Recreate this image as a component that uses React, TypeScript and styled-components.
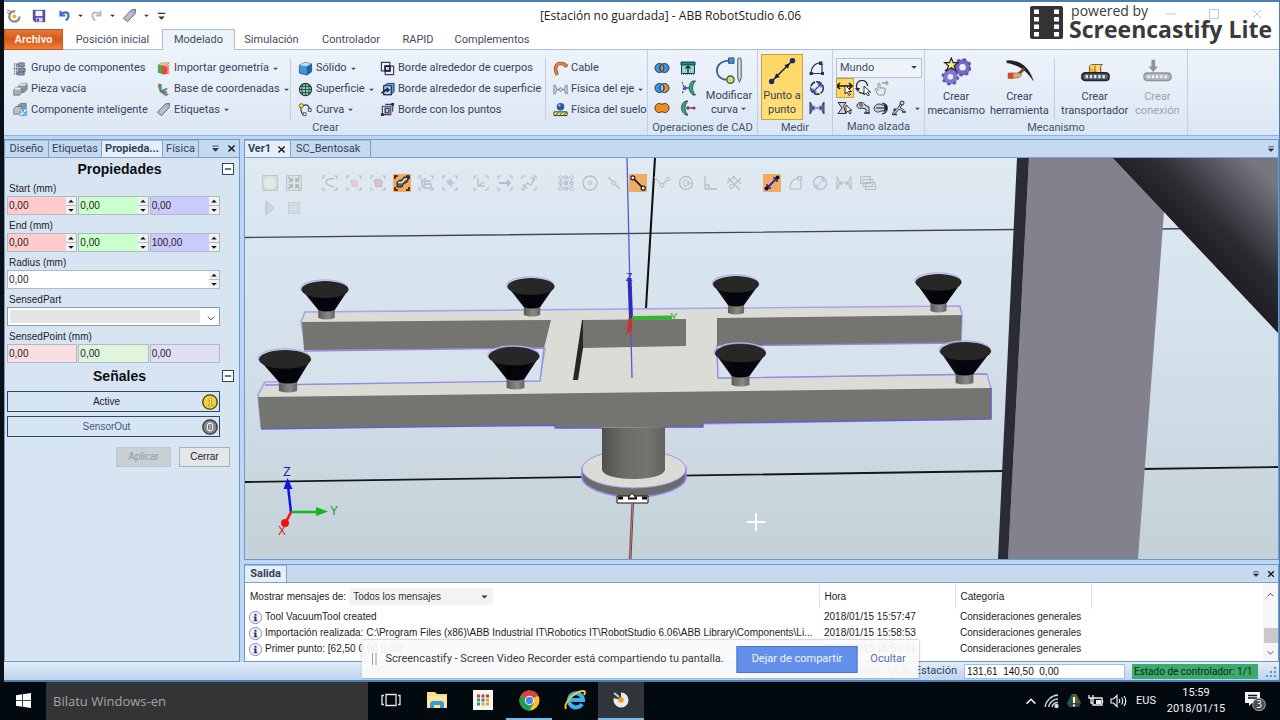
import React from 'react';
import styled, { createGlobalStyle, css } from 'styled-components';

const ui = 'Roboto, "Open Sans", sans-serif';
const wide = '"Open Sans", "Noto Sans", sans-serif';
const sans = '"Liberation Sans", Arial, sans-serif';

const GlobalStyle = createGlobalStyle`
  * { box-sizing: border-box; }
  html, body { margin: 0; padding: 0; }
  body { font-family: ${ui}; font-size: 11px; line-height: 16px; color: #34425c; background: #0a1016; }
  button, input, select { font: inherit; color: inherit; margin: 0; padding: 0; border: 0; background: none; border-radius: 0; }
  svg { display: block; flex: none; }
`;

/* ---------- icons ---------- */

const glyphs: Record<string, React.ReactNode> = {
  app: (
    <>
      <circle cx="9" cy="9" r="5.5" fill="none" stroke="#8d9294" strokeWidth="2.6" strokeDasharray="26 9" />
      <circle cx="9" cy="9" r="2.2" fill="#e9b52c" />
      <path d="M1 2 6 4M1 5l4 1" stroke="#777" strokeWidth="1" />
    </>
  ),
  save: (
    <>
      <path d="M1.500 1.500h13v13h-11l-2-2z" fill="#5a55b5" stroke="#35317e" />
      <path d="M4 2h8v6H4z" fill="#f2f4fb" />
      <path d="M5 10h7v4.500H5z" fill="#d8daf0" />
      <path d="M6 11h2v3H6z" fill="#35317e" />
    </>
  ),
  undo: <path d="M3 2v6h6M3.500 7.500C6 3 13 3 13 8c0 3-1 4.500-3.500 6" fill="none" stroke="#3f6fc0" strokeWidth="2.600" />,
  redo: <path d="M13 2v6H7M12.500 7.500C10 3 3 3 3 8c0 3 1 4.500 3.500 6" fill="none" stroke="#b9bcc2" strokeWidth="2.400" />,
  tag: (
    <>
      <path d="M1.500 11 10 2l4.500-.5L14 6l-8 8.500z" fill="#b9bbd2" stroke="#62647c" />
      <circle cx="12" cy="4" r="1" fill="#fff" stroke="#62647c" strokeWidth=".6" />
    </>
  ),
  more: <path d="M4 5h8v1.500H4zM4.500 9h7L8 12.500z" fill="#333" />,
  group: (
    <>
      <path d="M3.500 3.500h8v10h-8z" fill="#b8c0cc" stroke="#4d5a6d" strokeDasharray="2 1" />
      <path d="M6 2h6v4H6zM6 8h7v3H6zM5 12h7v3H5z" fill="#8d99ab" stroke="#4d5a6d" strokeWidth=".8" />
      <path d="M1.500 3v11M1 3h3M1 8h3M1 14h3" stroke="#4d5a6d" strokeDasharray="1 1" />
    </>
  ),
  part: (
    <>
      <path d="m6 4 3-2.500h6V8l-3 3H6z" fill="#8f959c" stroke="#555b62" strokeWidth=".7" />
      <path d="M6 4 9 1.500h6L12.500 4z" fill="#e3e6e9" />
      <path d="m.8 8 2.500-2.200h6v5.500L7 14H.8z" fill="#a9afb5" stroke="#555b62" strokeWidth=".7" />
      <path d="m.8 8 2.500-2.200h6L7 8z" fill="#eef0f2" />
    </>
  ),
  smart: (
    <>
      <path d="m5 4 3-2.500h6V8l-3 3H5z" fill="#8f959c" stroke="#555b62" strokeWidth=".7" />
      <path d="m.8 7 2.500-2.200h6v5.500L7 13H.8z" fill="#b9bfc5" stroke="#555b62" strokeWidth=".7" />
      <path d="M7 7h8v8H7z" fill="#5aa6e0" />
      <path d="m8 8 6 6m0-6-6 6" stroke="#fff" strokeWidth="1.800" />
      <path d="m9 8 5 6" stroke="#1d5f9e" strokeWidth="1" />
    </>
  ),
  importGeo: (
    <>
      <path d="M2 4.500 6 2h8l-3 2.500z" fill="#f6d9a8" stroke="#8d6b33" strokeWidth=".6" />
      <path d="M2 4.500h6V14l-6-1.500z" fill="#4ca457" />
      <path d="M6.500 5H14v8.500l-7.500 1z" fill="#df4c36" />
      <path d="M6.500 5 9 4h6l-1 1.500v8l-2 .5V6z" fill="#f39b8a" />
    </>
  ),
  frame: (
    <>
      <path d="M5 2v8l6 4M5 10l7-3" fill="none" stroke="#2d8fc7" strokeWidth="2" />
      <path d="M5 10 3 4" stroke="#2bab4b" strokeWidth="2" />
      <path d="m5 10 7 1" stroke="#e8452f" strokeWidth="2" />
      <path d="m2 5 1-4 2.500 3z" fill="#e8452f" />
      <path d="m10 12 4 1-3 2z" fill="#2bab4b" />
    </>
  ),
  solid: (
    <>
      <path d="m1.500 4.500 6-3 7 1.500v8.500l-5 3.500-8-2z" fill="#3f95d6" stroke="#1d4e7d" strokeWidth=".8" />
      <path d="m1.500 4.500 6-3 7 1.500-5 2.500z" fill="#bfe0f5" />
      <path d="M9.500 5.500 14.500 3v8.500l-5 3.500z" fill="#1e65a6" />
    </>
  ),
  surface: (
    <>
      <circle cx="8" cy="8" r="6.500" fill="#8fd3ba" stroke="#1f3f3a" strokeWidth="1.200" />
      <path d="M1.500 8h13M8 1.500v13M2.500 4.700h11M2.500 11.300h11M5 2.200Q3 8 5 13.800M11 2.200Q13 8 11 13.800" fill="none" stroke="#1f3f3a" strokeWidth=".9" />
    </>
  ),
  curve: (
    <>
      <path d="M3 5c0 5 1 8 3 8M5 4c4-2 7-1 7 4" fill="none" stroke="#2c3140" strokeWidth="1.200" />
      <circle cx="3.500" cy="4" r="2.300" fill="#f0d638" stroke="#5d5214" strokeWidth=".8" />
      <path d="M5.500 11.500h3v3h-3zM11 7h3v3h-3z" fill="#fff" stroke="#2c3140" strokeWidth=".9" />
    </>
  ),
  borderBodies: (
    <>
      <path d="M1.500 1.500h9v9h-9z" fill="none" stroke="#3d4258" strokeWidth="1.300" />
      <path d="M5.500 5.500h9v9h-9z" fill="none" stroke="#3d4258" strokeWidth="1.300" />
      <path d="M5.500 5.500h5v5h-5z" fill="#cfd5ea" stroke="#1d2138" strokeWidth="1.800" />
    </>
  ),
  borderSurface: (
    <>
      <path d="m4 4 4-2.500h7V10l-3 3.500H4z" fill="#5a9cd4" stroke="#1b2c55" strokeWidth=".9" />
      <path d="M4 4h8v9.500H4z" fill="#bcdcf2" stroke="#1b2c55" strokeWidth="1.300" />
      <path d="M1 11.500c2-1 3-4 6-4.500V5l4 3.500-4 3v-2c-2 .5-3 2.500-6 3z" fill="#1b2c55" />
    </>
  ),
  borderPoints: (
    <>
      <path d="M2.500 4.500h9v9h-9zM5.500 2.500h8v8" fill="none" stroke="#3d4258" strokeWidth="1.200" />
      <path d="M5.500 6.500h4v5h-4z" fill="#c9c2dd" stroke="#3d2d5c" strokeWidth="1.400" />
      <path d="M1 12h3v3H1zM12 1h3v3h-3z" fill="#262a3d" />
    </>
  ),
  cable: (
    <>
      <path d="M4.500 15C1 8 3 2.500 8 2.500c3 0 5 1 7 3.500" fill="none" stroke="#8a3a12" strokeWidth="3.600" />
      <path d="M4.500 15C1 8 3 2.500 8 2.500c3 0 5 1 7 3.500" fill="none" stroke="#e8824a" strokeWidth="2.200" />
    </>
  ),
  joint: (
    <>
      <path d="M1 3v10M2 3c2 2 2 8 0 10M15 3v10M14 3c-2 2-2 8 0 10" fill="none" stroke="#6c7484" />
      <path d="M4 8h8" stroke="#6c7484" strokeWidth="1.200" />
      <circle cx="8" cy="8" r="1.800" fill="#dde3ec" stroke="#6c7484" />
    </>
  ),
  floor: (
    <>
      <path d="M1 10.500h14v4H1z" fill="#e9e48b" stroke="#33361e" />
      <path d="m3 14 3-3m1 3 3-3m1 3 3-3" stroke="#33361e" />
      <circle cx="8" cy="5" r="4" fill="#2457a8" />
      <circle cx="6.800" cy="3.600" r="1.300" fill="#9dc4f2" />
    </>
  ),
  intersect: (
    <>
      <circle cx="5.500" cy="8" r="4.500" fill="#3f95dd" stroke="#173a63" />
      <circle cx="10.500" cy="8" r="4.500" fill="#3f95dd" stroke="#173a63" />
      <path d="M8 4.300a4.500 4.500 0 0 1 0 7.400 4.500 4.500 0 0 1 0-7.400" fill="#f08c28" stroke="#173a63" />
    </>
  ),
  subtract: (
    <>
      <circle cx="10.500" cy="8" r="4.500" fill="#f08c28" stroke="#173a63" />
      <circle cx="5.500" cy="8" r="4.500" fill="#3f95dd" stroke="#173a63" />
      <path d="M8 4.300a4.500 4.500 0 0 1 0 7.400 4.500 4.500 0 0 1 0-7.400" fill="#9ecdf2" stroke="#173a63" />
    </>
  ),
  union: <path d="M8 4.500C11 2 15 4 15 8s-4 6-7 3.500C5 14 1 12 1 8s4-6 7-3.500z" fill="#f08c28" stroke="#4d3517" />,
  extrude: (
    <>
      <path d="M1.500 3.500h13v10h-13z" fill="#8fdcc9" stroke="#1d4440" />
      <path d="M1 2h14v3H1z" fill="#2a7d98" stroke="#173f55" />
      <path d="M8 13V6M5.500 8.500 8 6l2.500 2.500" fill="none" stroke="#16202c" strokeWidth="1.200" />
      <path d="M1 14h14" stroke="#16202c" strokeDasharray="1 1" />
    </>
  ),
  bend: (
    <>
      <path d="M13 1c-5 2-5 11 0 14h2.500c-4-4-4-10 0-14z" fill="#3fa98c" stroke="#17463b" strokeWidth=".9" />
      <path d="M2 2c2 3 2 9 0 12" fill="none" stroke="#23272f" strokeDasharray="2 1" />
      <path d="M9 8H4m2-2L4 8l2 2" fill="none" stroke="#2b57b3" strokeWidth="1.300" />
    </>
  ),
  bendTo: (
    <>
      <path d="M6 1C0 3 0 12 6 15h2C4 11 4 5 8 1z" fill="#3fa98c" stroke="#17463b" strokeWidth=".9" />
      <path d="M6 8h7" stroke="#b3243c" strokeWidth="1.400" />
      <circle cx="14" cy="8" r="1.500" fill="#b3243c" />
      <path d="M8 6v4" stroke="#23272f" />
    </>
  ),
  modifyCurve: (
    <>
      <path d="M16 4C6 4 2 10 2 15s4 10 11 10" fill="none" stroke="#3c5f96" strokeWidth="2" />
      <path d="M15 1h6v6h-6z" fill="#4193d4" stroke="#1d4e7d" />
      <circle cx="17" cy="25" r="4" fill="#f3dc3a" stroke="#2f5488" strokeWidth="1.500" />
      <path d="M25 3c0-3 4-3 4 0v20l-2 5-2-5z" fill="#b9bec7" stroke="#5d6470" />
      <path d="M27 4v19" stroke="#eef0f4" />
    </>
  ),
  pointToPoint: (
    <>
      <path d="M5 26 26 5" stroke="#16203e" strokeWidth="1.600" />
      <path d="m7 24 2-6 4 4zM24 7l-2 6-4-4z" fill="#16203e" />
      <circle cx="4" cy="27" r="3" fill="#1b2a63" />
      <circle cx="27" cy="4" r="3" fill="#1b2a63" />
    </>
  ),
  angle: (
    <>
      <path d="M2 14C2 7 6 3 11 3M2 13.500h12M13 4v9" fill="none" stroke="#2f3547" strokeWidth="1.200" />
      <path d="M10 1.500h3.500V5H10zM.500 12H4v3H.5zM12 12h3v3h-3z" fill="#2f3547" />
    </>
  ),
  diameter: (
    <>
      <circle cx="8" cy="8" r="6.300" fill="none" stroke="#272b38" strokeWidth="1.400" strokeDasharray="6 1" />
      <path d="m4 12 8-8M4 8.500V12h3.500M12 7.500V4H8.500" fill="none" stroke="#3542b0" strokeWidth="1.300" />
    </>
  ),
  minDist: (
    <>
      <path d="M1 2v12c3-3 3-9 0-12zM15 2v12c-3-3-3-9 0-12z" fill="#777e90" stroke="#272b38" strokeWidth=".9" />
      <path d="M3 8h10M5.500 6 3.500 8l2 2M10.500 6l2 2-2 2" fill="none" stroke="#3542b0" strokeWidth="1.200" />
    </>
  ),
  move: (
    <>
      <path d="M0 6h15M3 3 0 6l3 3M12 3l3 3-3 3" fill="none" stroke="#1b1b1b" strokeWidth="1.600" />
      <path d="m8 5 0 9 2-2 2 3.500 1.500-1-2-3h3z" fill="#fff" stroke="#1b1b1b" strokeWidth=".9" />
    </>
  ),
  rotate: (
    <>
      <path d="M2.500 9a5.500 5.500 0 1 1 10-3M12 11a5.500 5.500 0 0 1-8 1" fill="none" stroke="#2b2b2b" strokeWidth="1.300" />
      <path d="m0 8 3 4 2-4z" fill="#2b2b2b" />
      <path d="m9 6 0 9 2-2 2 3 1.500-1-2-3h3z" fill="#fff" stroke="#1b1b1b" strokeWidth=".9" />
    </>
  ),
  hand: (
    <>
      <path d="M5 15 2 9l1-.5 2 2V4c0-1 2-1 2 0v4h5v4l-1 3z" fill="#e7eaf0" stroke="#8d93a0" />
      <path d="M9 3h6m-2-2 2 2-2 2" fill="none" stroke="#9aa0ab" strokeWidth="1.300" />
    </>
  ),
  robotArm: (
    <>
      <path d="M1 2.500h8L6.500 6 9 13.500H1L5 8z" fill="#ccd0d8" stroke="#2e3138" />
      <path d="m9 5 0 8 2-2 2 3 1.200-1-2-2.500H15z" fill="#fff" stroke="#1b1b1b" strokeWidth=".9" />
    </>
  ),
  linkMove: (
    <>
      <path d="M2 5c2-4 7-3 8 0l4 2v6h-3V9L7 8C4 9 2 8 2 5z" fill="#ccd0d8" stroke="#2e3138" />
      <circle cx="6" cy="5" r="1.300" fill="#fff" stroke="#2e3138" />
      <path d="M9 13h6" stroke="#2e3138" strokeWidth="1.400" />
    </>
  ),
  linkRotate: (
    <>
      <path d="M1 8c1-4 6-5 8-3h3v6H8c-3 2-7 1-7-3z" fill="#ccd0d8" stroke="#2e3138" />
      <path d="M9 3c7 1 7 9 0 11M3 8h11m-3-3 3 3-3 3" fill="none" stroke="#1b1b1b" strokeWidth="1.200" />
    </>
  ),
  multiRobot: (
    <>
      <path d="M2 14 8 8M8 8l3-5M8 8l5 3M3 9l3 3" stroke="#2e3138" strokeWidth="2.600" />
      <path d="M2 14 8 8M8 8l3-5M8 8l5 3" stroke="#ccd0d8" strokeWidth="1.200" />
      <circle cx="11" cy="3" r="2" fill="#ccd0d8" stroke="#2e3138" />
      <path d="M1 14.500h5M11 12h4" stroke="#2e3138" strokeWidth="1.300" />
    </>
  ),
  mechanism: (
    <>
      <circle cx="23" cy="11" r="6" fill="none" stroke="#7668c4" strokeWidth="5" />
      <circle cx="23" cy="11" r="8.500" fill="none" stroke="#5d50ad" strokeWidth="2.500" strokeDasharray="3.400 3.300" />
      <circle cx="10" cy="21" r="5.500" fill="none" stroke="#8377d0" strokeWidth="5" />
      <circle cx="10" cy="21" r="8.200" fill="none" stroke="#5d50ad" strokeWidth="2.500" strokeDasharray="3.200 3.240" />
      <path d="m11 1 2 5 5 0-4 3.500 2 5-5-3-5 3 2-5L4 6l5 0z" fill="#f7ee7a" stroke="#22243a" strokeWidth="1.300" />
    </>
  ),
  pick: (
    <>
      <path d="M3 4C15 3 26 9 31 25 24 14 15 8 3 6z" fill="#1d1f23" stroke="#1d1f23" strokeWidth=".6" />
      <path d="m22 12-7 7" stroke="#7d4a1d" strokeWidth="3" />
      <path d="M5 17h7l5 0 2 2-3 3-11 1z" fill="#e5a57c" stroke="#7d4a2d" strokeWidth=".6" />
      <path d="M4 17h6v6H4z" fill="#d9472b" />
    </>
  ),
  conveyor: (
    <>
      <path d="M10 10h12v8H10z" fill="#f2b632" stroke="#8a5a12" />
      <path d="m10 10 2-2h12l-2 2v8M16 9v9" fill="#f9dc7a" stroke="#8a5a12" />
      <path d="M6 17h21q4 0 4 4t-4 4H6q-4 0-4-4t4-4z" fill="#5a5e6b" stroke="#22242b" strokeWidth="1.800" />
      <path d="M6 21h22" stroke="#dfe6ff" strokeWidth="3.500" strokeDasharray="2.500 2" />
    </>
  ),
  connection: (
    <>
      <path d="M10 3h4v7h3l-5 6-5-6h3z" fill="#8e929a" />
      <path d="M6 17h21q4 0 4 4t-4 4H6q-4 0-4-4t4-4z" fill="#b5b9c1" stroke="#8e929a" strokeWidth="1.500" />
      <path d="M6 21h22" stroke="#eef1f6" strokeWidth="3" strokeDasharray="2.500 2" />
    </>
  ),
  close: <path d="m3.500 3.500 9 9m0-9-9 9" stroke="#151515" strokeWidth="2" />,
  pin: <path d="M3.500 4.500h9M4 8h8l-4 4z" fill="#26354a" stroke="#26354a" strokeWidth="1.200" />,
  minus: <path d="M3 8h10" stroke="#16202c" strokeWidth="2" />,
  chevron: <path d="m3 6 5 5 5-5" fill="none" stroke="#3d3d3d" strokeWidth="1.500" />,
  chevronUp: <path d="m3 11 5-5 5 5" fill="none" stroke="currentColor" strokeWidth="1.700" />,
  caret: <path d="M2.500 6h11L8 11.500z" fill="currentColor" />,
  caretUp: <path d="M2.500 11h11L8 5.500z" fill="currentColor" />,
  one: (
    <>
      <circle cx="8" cy="8" r="7.200" fill="#f0d43c" stroke="#453c12" strokeWidth="1.300" />
      <path d="M6 5.500 8 4h1.500v7H11v1H6v-1h1.700V6L6 6.500z" fill="#fdf6b8" stroke="#a48514" strokeWidth=".7" />
    </>
  ),
  zero: (
    <>
      <circle cx="8" cy="8" r="7.200" fill="#85888d" stroke="#303338" strokeWidth="1.300" />
      <ellipse cx="8" cy="8" rx="2.600" ry="3.800" fill="#5c5f65" stroke="#f2f3f5" strokeWidth="1.200" />
      <path d="M8 5.500v5" stroke="#fff" />
    </>
  ),
  info: (
    <>
      <circle cx="8" cy="8" r="6.500" fill="#f4f5fc" stroke="#8388a8" />
      <path d="M7 4h2v2H7zM6 7h3v4h1v1H6v-1h1V8H6z" fill="#20287c" />
    </>
  ),
};

const Glyph = ({ name, size = 16, box = 16 }: { name: string; size?: number; box?: number }) => (
  <svg width={size} height={size} viewBox={`0 0 ${box} ${box}`} aria-hidden="true">
    {glyphs[name]}
  </svg>
);

/* ---------- frame ---------- */

const Desktop = styled.div`
  min-height: 100vh;
  display: flex;
  flex-direction: column;
  position: relative;
`;

const AppWindow = styled.main`
  flex: 1;
  display: flex;
  flex-direction: column;
  margin-left: 4px;
  border: 1px solid #4a80b0;
  border-width: 2px 1px 2px 0;
  background: #bdd6f5;
`;

const TitleBar = styled.header`
  height: 27px;
  display: flex;
  align-items: center;
  background: #fff;
  padding-left: 2px;
`;

const QuickButton = styled.button<{ $wide?: boolean }>`
  display: flex;
  align-items: center;
  width: ${(p) => (p.$wide ? 32 : 26)}px;
  gap: 6px;
  color: #333;
`;

const Title = styled.h1`
  flex: 1;
  margin: 0 118px 0 0;
  text-align: center;
  font-family: ${wide};
  font-size: 12px;
  font-weight: 400;
  color: #1c1c1c;
`;

const TabRow = styled.nav`
  display: flex;
  height: 21px;
  background: #fff;
  border-bottom: 1px solid #a9bdd3;
`;

const RibbonTab = styled.button<{ $w: number; $kind?: 'file' | 'active' }>`
  width: ${(p) => p.$w}px;
  height: 21px;
  color: #3f4c63;
  ${(p) =>
    p.$kind === 'file' &&
    css`
      color: #fff3e6;
      font-weight: 700;
      background: linear-gradient(#e27a3a, #d9571a 50%, #ec8238);
      border: 1px solid #c4561e;
    `}
  ${(p) =>
    p.$kind === 'active' &&
    css`
      background: #edf3fa;
      border: 1px solid #a9bdd3;
      border-bottom: 0;
    `}
`;

const Ribbon = styled.section`
  display: flex;
  height: 86px;
  background: linear-gradient(#edf3fa, #e3ecf7 60%, #dae6f4);
  border-bottom: 1px solid #8fb2dc;
`;

const RibbonGroup = styled.div<{ $w: number }>`
  width: ${(p) => p.$w}px;
  display: flex;
  flex-direction: column;
  border-right: 1px solid #c3cfdf;
`;

const GroupBody = styled.div<{ $pad: number }>`
  display: flex;
  height: 70px;
  padding: 8px 0 0 ${(p) => p.$pad}px;
`;

const GroupLabel = styled.div`
  text-align: center;
  line-height: 16px;
  color: #44516a;
`;

const Column = styled.div<{ $w: number; $rule?: boolean }>`
  width: ${(p) => p.$w}px;
  display: flex;
  flex-direction: column;
  ${(p) => p.$rule && 'border-right: 1px solid #c3cfdf; margin-right: 7px;'}
`;

const Command = styled.button`
  display: flex;
  align-items: center;
  height: 21px;
  gap: 3px;
  white-space: nowrap;
`;

const BigCommand = styled.button<{ $w: number; $on?: boolean; $off?: boolean }>`
  width: ${(p) => p.$w}px;
  height: 66px;
  margin-top: -4px;
  padding-top: 3px;
  display: flex;
  flex-direction: column;
  align-items: center;
  line-height: 14px;
  white-space: pre-line;
  color: ${(p) => (p.$off ? '#9aa3b1' : 'inherit')};
  svg { margin-bottom: 3px; }
  ${(p) => p.$on && 'background: linear-gradient(#ffd663, #ffe07a); box-shadow: inset 0 0 0 1px #c9a136;'}
`;

const WithCaret = styled.span`
  display: flex;
  align-items: center;
  gap: 2px;
`;

const IconGrid = styled.div<{ $cols: number; $cell: number }>`
  display: grid;
  grid-template-columns: repeat(${(p) => p.$cols}, ${(p) => p.$cell}px);
  grid-auto-rows: 20px;
  align-content: start;
`;

const IconButton = styled.button<{ $on?: boolean }>`
  display: flex;
  align-items: center;
  justify-content: center;
  ${(p) => p.$on && 'background: #ffd663; box-shadow: inset 0 0 0 1px #c9a136;'}
`;

const SelectWrap = styled.div<{ $w?: number }>`
  position: relative;
  width: ${(p) => (p.$w ? `${p.$w}px` : '100%')};
  color: #333;
  svg { position: absolute; right: 4px; top: 50%; margin-top: -5px; pointer-events: none; }
`;

const RibbonSelect = styled.select`
  appearance: none;
  width: 100%;
  height: 20px;
  padding-left: 3px;
  border: 1px solid #b3c1d6;
  background: #eef3fa;
  color: #3f4c63;
`;

/* ---------- docked panels ---------- */

const Workspace = styled.div`
  flex: 1;
  display: flex;
  gap: 4px;
  padding-top: 3px;
`;

const SidePanel = styled.aside`
  width: 236px;
  flex: none;
  display: flex;
  flex-direction: column;
  border: 1px solid #6d9acb;
  background: #d7e5f3;
  font-family: ${sans};
  color: #1e2126;
`;

const MainColumn = styled.div`
  flex: 1;
  min-width: 0;
  display: flex;
  flex-direction: column;
  gap: 4px;
`;

const Dock = styled.section<{ $grow?: boolean }>`
  display: flex;
  flex-direction: column;
  border: 1px solid #6d9acb;
  background: #fff;
  ${(p) => p.$grow && 'flex: 1;'}
`;

const DockTabs = styled.div`
  display: flex;
  height: 18px;
  padding-right: 2px;
  background: #c5d9ef;
  border-bottom: 1px solid #7ca3cf;
  font-family: ${ui};
  color: #33415a;
`;

const DockTab = styled.button<{ $w: number; $on?: boolean; $start?: boolean }>`
  width: ${(p) => p.$w}px;
  display: flex;
  align-items: center;
  justify-content: ${(p) => (p.$start ? 'flex-start' : 'center')};
  padding-left: ${(p) => (p.$start ? 5 : 0)}px;
  gap: 5px;
  line-height: 16px;
  border-right: 1px solid #7ca3cf;
  border-top: 1px solid #9dbbdd;
  white-space: nowrap;
  ${(p) => p.$on && 'font-weight: 700; background: #e6eff8;'}
`;

const DockIcons = styled.div`
  display: flex;
  gap: 5px;
`;

const Spacer = styled.span`
  flex: 1;
`;

const PanelHeader = styled.div<{ $after?: number }>`
  display: flex;
  align-items: center;
  height: 22px;
  margin-bottom: ${(p) => p.$after ?? 0}px;
  padding: 0 5px 0 12px;
  h2 { flex: 1; margin: 0; font-size: 14px; text-align: center; color: #0d0d0d; }
`;

const CollapseButton = styled.button`
  width: 12px;
  height: 12px;
  display: flex;
  align-items: center;
  justify-content: center;
  background: #fff;
  border: 1px solid #2e4867;
`;

const Fields = styled.div`
  width: 215px;
  padding-left: 2px;
  display: flex;
  flex-direction: column;
`;

const FieldLabel = styled.label`
  display: block;
  height: 16px;
  line-height: 17px;
  padding-left: 2px;
  font-size: 10px;
`;

const FieldRow = styled.div<{ $cols: number }>`
  display: grid;
  grid-template-columns: repeat(${(p) => p.$cols}, minmax(0, 1fr));
  gap: 1px;
  margin-bottom: 2px;
`;

const Spin = styled.div<{ $bg: string }>`
  display: flex;
  height: 19px;
  background: ${(p) => p.$bg};
  border: 1px solid #b3b9c4;
  font-size: 10px;
  input { flex: 1; width: 100%; min-width: 0; padding-left: 1px; outline: 0; }
`;

const SpinButtons = styled.span`
  flex: none;
  width: 10px;
  display: grid;
  background: #f1f1f1;
  button { display: flex; align-items: center; justify-content: center; height: 8px; color: #111; }
  button + button { height: 9px; border-top: 1px solid #b3b9c4; }
`;

const PartSelect = styled.select`
  appearance: none;
  display: block;
  width: 100%;
  height: 19px;
  margin-bottom: 2px;
  border: 1px solid #8a9bb0;
  background: linear-gradient(#e4e4e4, #e4e4e4) 2px 2px / 190px 13px no-repeat #fff;
`;

const Signal = styled.button<{ $dim?: boolean }>`
  height: 21px;
  margin-bottom: 4px;
  display: flex;
  align-items: center;
  padding: 0 1px;
  border: 1px solid #2e4867;
  font-size: 10px;
  color: ${(p) => (p.$dim ? '#3d567c' : '#1e2126')};
  span { flex: 1; padding-left: 2px; }
`;

const Actions = styled.div`
  display: flex;
  justify-content: flex-end;
  gap: 8px;
  padding: 6px 9px 0 0;
`;

const ActionButton = styled.button`
  width: 51px;
  height: 20px;
  font-size: 10px;
  background: #e3e7ea;
  border: 1px solid #a8b0ba;
  &:disabled { width: 55px; background: #c8cfd5; border-color: #bdc6ce; color: #949ba3; }
`;

/* ---------- 3D view ---------- */

const View = styled.div`
  position: relative;
  flex: 1;
  min-height: 300px;
  overflow: hidden;
`;

const Scene = styled.svg`
  position: absolute;
  inset: 0;
  width: 100%;
  height: 100%;
`;

const ViewTools = styled.div`
  position: absolute;
  left: 16px;
  top: 16px;
  display: flex;
  flex-direction: column;
  gap: 7px;
`;

const ToolRow = styled.div`
  display: flex;
`;

const ToolGroup = styled.div<{ $before?: number }>`
  display: flex;
  gap: 6px;
  margin-left: ${(p) => p.$before ?? 0}px;
`;

const ViewTool = styled.button<{ $on?: boolean }>`
  width: 18px;
  height: 18px;
  display: flex;
  align-items: center;
  justify-content: center;
  color: ${(p) => (p.$on ? '#17161c' : '#b4bfc9')};
  background: ${(p) => (p.$on ? '#f2ab62' : 'none')};
`;

const corners = <path d="M1 4V1h3M12 1h3v3M15 12v3h-3M4 15H1v-3" fill="none" stroke="currentColor" strokeWidth="1.200" />;
const toolArt: Record<string, React.ReactNode> = {
  ball: (<><path d="M.5.500h15v15H.5z" fill="#d3dedb" stroke="#bdc8c8" /><circle cx="8" cy="8" r="6" fill="#e3ebe2" /></>),
  fit: (<><path d="M.5.500h15v15H.5z" fill="#d8e2e1" stroke="#bdc8c8" /><path d="m2 2 4 4M14 2l-4 4M2 14l4-4M14 14l-4-4M3 6h3V3M10 3v3h3M3 10h3v3M13 10h-3v3" stroke="#a8b7b4" strokeWidth="1.500" fill="none" /></>),
  selCurve: (<>{corners}<path d="M12 4C6 2 2 7 5 9s4 3 7 3" fill="none" stroke="currentColor" strokeWidth="1.500" /></>),
  selSurface: (<>{corners}<path d="m4 5 5-1 3 3v5l-6 0z" fill="#e0c9d3" /></>),
  selBody: (<>{corners}<path d="m4 5 5-1 3 2v5l-6 1z" fill="#dcc2cd" stroke="#c4b4c0" /></>),
  selPart: (<><path d="M1 4V1h3M12 1h3v3M15 12v3h-3M4 15H1v-3" fill="none" stroke="#2a1b10" strokeWidth="1.600" /><path d="m3 7 3-2h2l2-3h4v4l-2 2h-2l-2 4H3z" fill="#5c6468" stroke="#1d1e20" /><path d="M4 7.500h4L11 4h2" fill="none" stroke="#dfe8e6" strokeWidth="1.600" /></>),
  selGroup: (<>{corners}<path d="M4 3v10M7 3v5M3 6h10M6 9h7v4H6z" fill="none" stroke="currentColor" strokeWidth="1.300" /></>),
  selMech: (<>{corners}<path d="m4 6 3-1 1-2 2 3 3 2-3 1v3l-3-2z" fill="#bcc2dd" /></>),
  selFrame: (<>{corners}<path d="M5 3v8h7M5 11l6-4" fill="none" stroke="currentColor" strokeWidth="1.300" /></>),
  selTarget: (<>{corners}<path d="M2 8h11M10 5l3 3-3 3" fill="none" stroke="#b3bedb" strokeWidth="2" /></>),
  selPath: (<>{corners}<path d="m3 13 3-5 4 2 3-7M9 3h4v4M3 9v4h4" fill="none" stroke="currentColor" strokeWidth="1.200" /></>),
  snapObj: (<>{[2.5, 8, 13.5].map((y) => [2.5, 8, 13.5].map((x) => <circle key={`${x}-${y}`} cx={x} cy={y} r="1.800" fill="none" stroke="currentColor" />))}<path d="M4 2.500h8M4 13.500h8M2.500 4v8M13.500 4v8M5 5l6 6M11 5l-6 6" stroke="currentColor" strokeWidth=".7" /></>),
  snapCenter: (<><circle cx="8" cy="8" r="7" fill="none" stroke="currentColor" strokeWidth="1.300" /><circle cx="8" cy="8" r="1.800" fill="none" stroke="currentColor" /></>),
  snapMid: (<><path d="m2 2 12 12" stroke="currentColor" strokeWidth="1.200" /><circle cx="8" cy="8" r="2" fill="#dbe6ef" stroke="currentColor" /></>),
  snapEnd: (<><path d="m3 3 10 10" stroke="currentColor" strokeWidth="1.700" /><circle cx="2.800" cy="2.800" r="2" fill="#fff" stroke="currentColor" strokeWidth="1.200" /><circle cx="13.200" cy="13.200" r="2" fill="#fff" stroke="currentColor" strokeWidth="1.200" /></>),
  snapEdge: (<><path d="m0 2 8 8 6-6" fill="none" stroke="currentColor" strokeWidth="1.200" /><circle cx="8" cy="10.500" r="2" fill="#dbe6ef" stroke="currentColor" /><circle cx="14" cy="4" r="1.800" fill="#dbe6ef" stroke="currentColor" /></>),
  snapGrav: (<><circle cx="8" cy="8" r="6.500" fill="none" stroke="currentColor" strokeWidth="1.300" /><circle cx="8" cy="8" r="3" fill="none" stroke="currentColor" /><path d="M8 8h6" stroke="currentColor" /></>),
  snapLocal: <path d="M3 1v13h12M3 10h4v4" fill="none" stroke="currentColor" strokeWidth="1.300" />,
  snapGrid: (<><path d="m1 8 8-7M4 14 15 3M2 3l12 12M7 1l8 8" stroke="currentColor" strokeWidth="1.100" /><circle cx="5.500" cy="11.500" r="2" fill="#dbe6ef" stroke="currentColor" /></>),
  measure: (<><path d="m3 13 10-10" stroke="#2b22a0" strokeWidth="1.800" /><path d="M9 3h4v4M3 9v4h4" fill="none" stroke="#2b22a0" strokeWidth="1.500" /><circle cx="2.500" cy="13.500" r="2" fill="#101030" /><circle cx="13.500" cy="2.500" r="2" fill="#101030" /></>),
  mAngle: <path d="M2 14C2 7 6 3 11 3M2 14h12M13 4v9M10 1.500h3.500V5H10z" fill="none" stroke="currentColor" strokeWidth="1.200" />,
  mDia: (<><circle cx="8" cy="8" r="6.500" fill="none" stroke="currentColor" strokeWidth="1.300" /><path d="m4 12 8-8M4 8.500V12h3.500M12 7.500V4H8.500" fill="none" stroke="currentColor" /></>),
  mMin: <path d="M1 2v12c3-3 3-9 0-12zM15 2v12c-3-3-3-9 0-12zM3 8h10M6 6 4 8l2 2M10 6l2 2-2 2" fill="none" stroke="currentColor" strokeWidth="1.100" />,
  mKeep: <path d="M.5 1.500h10v7h-10zM3 4.500h10v7H3zM5.500 7.500h10v7h-10z" fill="#dbe6ef" stroke="currentColor" strokeWidth="1.100" />,
  play: <path d="M4 1v14l8-7z" fill="#cdd8df" stroke="#b5c1c9" />,
  stop: <path d="M2.500 2.500h11v11h-11z" fill="#d3dde5" stroke="#c5d0d8" />,
};

const Tools = ({ names, on, before }: { names: string[]; on?: string; before?: number }) => (
  <ToolGroup $before={before}>
    {names.map((n) => (
      <ViewTool key={n} $on={n === on} aria-label={n}>
        <svg width="16" height="16" viewBox="0 0 16 16">{toolArt[n]}</svg>
      </ViewTool>
    ))}
  </ToolGroup>
);

const Cup = ({ x, top, rx, h, stem, lean = 0 }: { x: number; top: number; rx: number; h: number; stem: number; lean?: number }) => {
  const ry = rx * 0.36;
  const sw = rx * 0.35;
  const by = top + h;
  const bx = x + lean;
  return (
    <g>
      <ellipse cx={x - 0.7} cy={top + ry - 1.2} rx={rx} ry={ry} fill="none" stroke="#b3adf0" strokeWidth="1.200" />
      <path d={`M${bx - sw} ${by - 2}V${by + stem - 2}q${sw} 3 ${sw * 2} 0V${by - 2}z`} fill="url(#stem)" />
      <path d={`M${x - rx} ${top + ry}L${bx - sw} ${by}q${sw} 3 ${sw * 2} 0L${x + rx} ${top + ry}z`} fill="url(#cone)" />
      <ellipse cx={x} cy={top + ry} rx={rx} ry={ry} fill="#272725" />
    </g>
  );
};

const RobotScene = () => (
  <Scene viewBox="244 158 1035 401" preserveAspectRatio="xMidYMid slice" role="img" aria-label="Ver1">
    <defs>
      <linearGradient id="sky" x2="0" y2="1">
        <stop stopColor="#dfeaf3" />
        <stop offset=".5" stopColor="#d3e0ea" />
        <stop offset="1" stopColor="#c5d1d8" />
      </linearGradient>
      <linearGradient id="cyl">
        <stop stopColor="#50504e" />
        <stop offset=".35" stopColor="#6b6b68" />
        <stop offset=".7" stopColor="#747471" />
        <stop offset="1" stopColor="#62625f" />
      </linearGradient>
      <linearGradient id="stem">
        <stop stopColor="#5b5b59" />
        <stop offset=".6" stopColor="#8a8a87" />
        <stop offset="1" stopColor="#646462" />
      </linearGradient>
      <linearGradient id="cone">
        <stop stopColor="#161616" />
        <stop offset=".4" stopColor="#040408" />
        <stop offset=".75" stopColor="#050512" />
        <stop offset="1" stopColor="#1e1e1e" />
      </linearGradient>
      <linearGradient id="tube" gradientUnits="userSpaceOnUse" x1="1190" y1="245" x2="1262" y2="172">
        <stop stopColor="#1d1d22" />
        <stop offset=".35" stopColor="#2c2c33" />
        <stop offset="1" stopColor="#77767f" />
      </linearGradient>
    </defs>
    <path d="M244 158h1035v401H244z" fill="url(#sky)" />
    <path d="m244 237.500 772-8M1160 229l119-2" stroke="#3f474d" strokeWidth="1.300" />
    <path d="m244 482 760-11M1140 469l139-2" stroke="#14181b" strokeWidth="1.800" />
    <path d="m655 158-9 150" stroke="#0c0c0c" strokeWidth="2" />
    <path d="M1029 158h139l-30 401H1008z" fill="#84818f" />
    <path d="M1017 158h12l-21 401H998z" fill="#2a2b35" />
    <path d="M1113 158h166v176z" fill="url(#tube)" />

    <g strokeLinejoin="round">
      <path d="m301 322 4-10 655-6 2 9-1 28-244 3 1 32 269-4 4 14v31l-288 5-148 2-294 1-3-32 7-13 275-4 5-30-239 1z" fill="#dcdcd7" stroke="#aaa3ee" strokeWidth="1.600" />
      <path d="m302 322 249-2-7 28-240 2z" fill="#747571" />
      <path d="m717 318 245-3-1 28-244 3z" fill="#747571" />
      <path d="M544 349 305 351l-20 33 255-3z" fill="#d6e2ec" />
      <path d="m717 347 245-4 4 31-248 4z" fill="#d6e2ec" />
      <path d="m304 351 240-3-4 33-275 4M961 343l-244 3 1 32 269-4" fill="none" stroke="#938be0" strokeWidth="1.300" />
      <path d="m582 320 104-1v27l-104 2z" fill="#747571" />
      <path d="M582 320h1v28l-5 32h-5z" fill="#262624" />
      <path d="m258 397 733-9v31l-288 4v4l-148 1v-3l-294 4z" fill="#747571" />
      <path d="m261 429 294-4v3h47M665 427h38v-4l288-4v-31" fill="none" stroke="#665fc4" strokeWidth="1.400" />
    </g>

    <path d="M582 468v9c0 10 23 20 52 20s52-10 52-20v-9z" fill="#6b6b68" stroke="#8f86ea" strokeWidth="1.500" />
    <ellipse cx="634" cy="469" rx="52" ry="19" fill="#dcdcd7" stroke="#9a92ea" />
    <path d="M602 428v42c3 12 60 12 63 0v-43z" fill="url(#cyl)" />
    <path d="M617 496h31v7h-31z" fill="#fff" stroke="#111" />
    <path d="M618 498h5m5 0h9m5 0h5" stroke="#111" strokeWidth="3" />
    <path d="m632 493 4 5h-8z" fill="#fff" stroke="#111" />
    <path d="m632 503-2.500 56" stroke="#a84848" strokeWidth="1.400" />
    <path d="m633.500 503-2.500 56" stroke="#2b2b2b" strokeWidth=".8" />

    <Cup x={325} top={281} rx={23.5} h={29} stem={10} lean={1.5} />
    <Cup x={531} top={278} rx={23.5} h={29} stem={10} lean={1} />
    <Cup x={736} top={276} rx={23} h={29} stem={10} />
    <Cup x={938.5} top={274} rx={23} h={29} stem={10} />
    <Cup x={285} top={350} rx={26} h={32} stem={11} lean={3} />
    <Cup x={514} top={347} rx={25.5} h={32} stem={11} lean={1.5} />
    <Cup x={740.5} top={344} rx={25.5} h={32} stem={11} />
    <Cup x={965.5} top={342} rx={25.5} h={32} stem={11} lean={-1} />

    <path d="m627 158 5 220" stroke="#5b55cf" strokeWidth="1.300" />
    <path d="m629.500 278 1.500 40" stroke="#2b2bc0" strokeWidth="4" />
    <path d="m632 318 40-.5" stroke="#35b535" strokeWidth="4" />
    <path d="m630.500 318-1 13" stroke="#d22c2c" strokeWidth="4" />
    <g fontFamily="Liberation Sans, sans-serif" fontSize="11" textAnchor="middle">
      <text x="629" y="281" fill="#2a2fc4">Z</text>
      <text x="674" y="321" fill="#2fae2f">Y</text>
      <text x="629" y="335" fill="#d22c2c">X</text>
      <g fontSize="12">
        <text x="287" y="476" fill="#1c2299">Z</text>
        <text x="334" y="515" fill="#0d9a2c">Y</text>
        <text x="282" y="535" fill="#d81b1b">X</text>
      </g>
    </g>
    <path d="m291 512-3-26" stroke="#1010f0" strokeWidth="2.500" />
    <path d="m287.500 478 5 11h-9z" fill="#1010f0" />
    <path d="M291 512h28" stroke="#10b818" strokeWidth="2.500" />
    <path d="m328 511.500-12 4.500v-9z" fill="#10b818" />
    <path d="m291 512-5 10" stroke="#f01010" strokeWidth="2.500" />
    <circle cx="285" cy="523" r="4" fill="#f01010" />
    <path d="M747 522h18M756 513v18" stroke="#fff" strokeWidth="2" />
  </Scene>
);

/* ---------- output ---------- */

const Output = styled.div`
  display: flex;
  height: 78px;
  font-family: ${sans};
  font-size: 10px;
  color: #1e2126;
`;

const LogTable = styled.table`
  flex: 1;
  width: 100%;
  table-layout: fixed;
  border-collapse: collapse;
  align-self: flex-start;
  th, td { padding: 0 0 0 5px; text-align: left; font-weight: 400; white-space: nowrap; height: 16px; }
  th { height: 26px; padding-top: 1px; border-right: 1px solid #e2e4e8; }
  th:last-child { border: 0; }
`;

const Filter = styled.div`
  display: flex;
  align-items: center;
  gap: 3px;
`;

const FilterSelect = styled.select`
  appearance: none;
  width: 100%;
  height: 17px;
  padding-left: 4px;
  background: #f3f3f3;
`;

const Message = styled.span`
  display: flex;
  align-items: center;
  gap: 2px;
  svg { margin-left: -2px; }
`;

const Scrollbar = styled.div`
  width: 15px;
  display: flex;
  flex-direction: column;
  align-items: center;
  padding: 7px 0 4px;
  background: #f6f6f6;
  color: #444;
`;

const Thumb = styled.span`
  width: 14px;
  height: 15px;
  margin-top: auto;
  margin-bottom: 5px;
  background: #c9c9c9;
`;

const StatusBar = styled.footer`
  height: 18px;
  display: flex;
  align-items: center;
  justify-content: flex-end;
  gap: 7px;
  padding-right: 2px;
  background: linear-gradient(#e3edf9, #bdd3ee);
  color: #34425c;
  svg { margin-left: 1px; }
`;

const StatusHint = styled.span`
  width: 80px;
  color: #8ea2c0;
  white-space: nowrap;
`;

const Coordinates = styled.output`
  width: 161px;
  height: 15px;
  line-height: 14px;
  padding-left: 2px;
  border: 1px solid #a9bdd3;
  background: #fff;
  font-family: ${sans};
  font-size: 10px;
  color: #111;
  white-space: pre;
`;

const ControllerState = styled.span`
  width: 126px;
  height: 15px;
  line-height: 15px;
  padding-left: 2px;
  background: #3cab6c;
  font-size: 10px;
  color: #10291b;
  white-space: nowrap;
`;

/* ---------- overlays ---------- */

const Watermark = styled.div`
  position: absolute;
  top: 3px;
  right: 8px;
  display: flex;
  gap: 5px;
  font-family: ${wide};
  color: #3a3a3a;
`;

const WatermarkText = styled.div`
  font-size: 23px;
  line-height: 20px;
  font-weight: 700;
  small { display: block; font-size: 14px; line-height: 16px; font-weight: 400; margin-left: 2px; }
`;

const WindowControls = styled.div`
  position: absolute;
  top: 8px;
  right: 18px;
  display: flex;
  gap: 33px;
  opacity: 0.25;
`;

const ShareBar = styled.div`
  position: absolute;
  left: 50%;
  bottom: 42px;
  transform: translateX(-50%);
  width: 557px;
  height: 38px;
  display: flex;
  align-items: center;
  padding-left: 10px;
  background: rgba(250, 250, 250, 0.93);
  box-shadow: 0 0 2px rgba(0, 0, 0, 0.45);
  color: #3c3c3c;
  p { flex: 1; margin: 0 0 0 8px; white-space: nowrap; }
`;

const StopButton = styled.button`
  width: 121px;
  height: 27px;
  color: #f2f6ff;
  background: #6390ea;
  border: 1px solid #4a76cf;
`;

const HideLink = styled.a`
  width: 61px;
  text-align: center;
  color: #5b6fa8;
  text-decoration: none;
`;

/* ---------- taskbar ---------- */

const Taskbar = styled.footer`
  height: 38px;
  display: flex;
  align-items: stretch;
  background: #02090f;
  color: #f4f4f4;
`;

const TaskButton = styled.button<{ $on?: boolean; $run?: boolean }>`
  width: 46px;
  display: flex;
  align-items: center;
  justify-content: center;
  background: ${(p) => (p.$on ? '#30363b' : 'none')};
  border-bottom: 2px solid ${(p) => (p.$on || p.$run ? '#76b9ed' : 'transparent')};
`;

const SearchBox = styled.input`
  width: 322px;
  padding-left: 7px;
  background: #333436;
  font-family: ${wide};
  font-size: 13px;
  outline: 0;
  &::placeholder { color: #a5a5a5; opacity: 1; }
`;

const Tray = styled.div`
  display: flex;
  align-items: center;
  gap: 6px;
  padding-right: 14px;
`;

const Clock = styled.time`
  width: 62px;
  margin: 0 11px 0 3px;
  text-align: center;
  line-height: 16px;
`;

const crearLeft = [['group', 'Grupo de componentes'], ['part', 'Pieza vacía'], ['smart', 'Componente inteligente']];
const crearGeo = [['importGeo', 'Importar geometría'], ['frame', 'Base de coordenadas'], ['tag', 'Etiquetas']];
const crearShape = [['solid', 'Sólido'], ['surface', 'Superficie'], ['curve', 'Curva']];
const crearBorder = [['borderBodies', 'Borde alrededor de cuerpos'], ['borderSurface', 'Borde alrededor de superficie'], ['borderPoints', 'Borde con los puntos']];

const Commands = ({ items, carets }: { items: string[][]; carets?: boolean }) => (
  <>
    {items.map(([icon, text]) => (
      <Command key={text}>
        <Glyph name={icon} size={15} />
        <span>{text}</span>
        {carets && <Glyph name="caret" size={7} />}
      </Command>
    ))}
  </>
);

const SpinField = ({ id, value, bg, arrows = true, label }: { id: string; value: string; bg: string; arrows?: boolean; label?: string }) => (
  <Spin $bg={bg}>
    <input id={id} defaultValue={value} aria-label={label} readOnly={!arrows} />
    {arrows && (
      <SpinButtons>
        <button aria-label="+"><Glyph name="caretUp" size={8} /></button>
        <button aria-label="-"><Glyph name="caret" size={8} /></button>
      </SpinButtons>
    )}
  </Spin>
);

const strong = ['#ffcbcb', '#cbffcb', '#cbcbfb'];
const pale = ['#f9dfe1', '#dff5de', '#e0dff3'];

const Vector = ({ id, label, values, locked }: { id: string; label: string; values: string[]; locked?: boolean }) => (
  <>
    <FieldLabel htmlFor={`${id}0`}>{label}</FieldLabel>
    <FieldRow $cols={3}>
      {values.map((v, i) => (
        <SpinField key={i} id={`${id}${i}`} value={v} bg={(locked ? pale : strong)[i]} arrows={!locked} label={`${label} ${'XYZ'[i]}`} />
      ))}
    </FieldRow>
  </>
);

const log = [
  ['Tool VacuumTool created', '2018/01/15 15:57:47'],
  ['Importación realizada: C:\\Program Files (x86)\\ABB Industrial IT\\Robotics IT\\RobotStudio 6.06\\ABB Library\\Components\\Li...', '2018/01/15 15:58:53'],
  ['Primer punto: [62,50 0,00 0,00]', '2018/01/15 15:59:21'],
];

export default function App() {
  return (
    <Desktop>
      <GlobalStyle />
      <AppWindow>
        <TitleBar>
          <QuickButton aria-label="RobotStudio"><Glyph name="app" size={15} /></QuickButton>
          <QuickButton aria-label="Guardar"><Glyph name="save" size={14} /></QuickButton>
          <QuickButton $wide aria-label="Deshacer"><Glyph name="undo" size={13} /><Glyph name="caret" size={7} /></QuickButton>
          <QuickButton $wide aria-label="Rehacer"><Glyph name="redo" size={13} /><Glyph name="caret" size={7} /></QuickButton>
          <QuickButton $wide aria-label="Etiquetas"><Glyph name="tag" size={15} /><Glyph name="caret" size={7} /></QuickButton>
          <QuickButton aria-label="Personalizar"><Glyph name="more" size={15} /></QuickButton>
          <Title>[Estación no guardada] - ABB RobotStudio 6.06</Title>
        </TitleBar>
        <TabRow>
          <RibbonTab $w={59} $kind="file">Archivo</RibbonTab>
          <RibbonTab $w={99}>Posición inicial</RibbonTab>
          <RibbonTab $w={73} $kind="active">Modelado</RibbonTab>
          <RibbonTab $w={73}>Simulación</RibbonTab>
          <RibbonTab $w={86}>Controlador</RibbonTab>
          <RibbonTab $w={48}>RAPID</RibbonTab>
          <RibbonTab $w={100}>Complementos</RibbonTab>
        </TabRow>
        <Ribbon>
          <RibbonGroup $w={644}>
            <GroupBody $pad={9}>
              <Column $w={143}><Commands items={crearLeft} /></Column>
              <Column $w={135} $rule><Commands items={crearGeo} carets /></Column>
              <Column $w={82}><Commands items={crearShape} carets /></Column>
              <Column $w={166} $rule><Commands items={crearBorder} /></Column>
              <Column $w={94}>
                <Commands items={[['cable', 'Cable']]} />
                <Commands items={[['joint', 'Física del eje']]} carets />
                <Commands items={[['floor', 'Física del suelo']]} />
              </Column>
            </GroupBody>
            <GroupLabel>Crear</GroupLabel>
          </RibbonGroup>
          <RibbonGroup $w={110}>
            <GroupBody $pad={1}>
              <IconGrid $cols={2} $cell={26}>
                {['intersect', 'extrude', 'subtract', 'bend', 'union', 'bendTo'].map((n) => (
                  <IconButton key={n} aria-label={n}><Glyph name={n} size={16} /></IconButton>
                ))}
              </IconGrid>
              <BigCommand $w={56}>
                <Glyph name="modifyCurve" size={29} box={32} />
                Modificar
                <WithCaret>curva <Glyph name="caret" size={7} /></WithCaret>
              </BigCommand>
            </GroupBody>
            <GroupLabel>Operaciones de CAD</GroupLabel>
          </RibbonGroup>
          <RibbonGroup $w={75}>
            <GroupBody $pad={3}>
              <BigCommand $w={42} $on>
                <Glyph name="pointToPoint" size={29} box={32} />
                {'Punto a\npunto'}
              </BigCommand>
              <IconGrid $cols={1} $cell={27}>
                {['angle', 'diameter', 'minDist'].map((n) => (
                  <IconButton key={n} aria-label={n}><Glyph name={n} size={16} /></IconButton>
                ))}
              </IconGrid>
            </GroupBody>
            <GroupLabel>Medir</GroupLabel>
          </RibbonGroup>
          <RibbonGroup $w={92}>
            <GroupBody $pad={3}>
              <Column $w={86}>
                <SelectWrap>
                  <RibbonSelect aria-label="Sistema de coordenadas" defaultValue="Mundo"><option>Mundo</option></RibbonSelect>
                  <Glyph name="caret" size={8} />
                </SelectWrap>
                <IconGrid $cols={5} $cell={18}>
                  {['move', 'rotate', 'hand'].map((n) => (
                    <IconButton key={n} $on={n === 'move'} aria-label={n}><Glyph name={n} size={16} /></IconButton>
                  ))}
                  <span />
                  <span />
                  {['robotArm', 'linkMove', 'linkRotate', 'multiRobot'].map((n) => (
                    <IconButton key={n} aria-label={n}><Glyph name={n} size={16} /></IconButton>
                  ))}
                  <IconButton aria-label="Más"><Glyph name="caret" size={7} /></IconButton>
                </IconGrid>
              </Column>
            </GroupBody>
            <GroupLabel>Mano alzada</GroupLabel>
          </RibbonGroup>
          <RibbonGroup $w={263}>
            <GroupBody $pad={0}>
              <BigCommand $w={63}><Glyph name="mechanism" size={30} box={32} />{'Crear\nmecanismo'}</BigCommand>
              <Column $w={68} $rule>
                <BigCommand $w={64}><Glyph name="pick" size={30} box={32} />{'Crear\nherramienta'}</BigCommand>
              </Column>
              <BigCommand $w={66}><Glyph name="conveyor" size={30} box={32} />{'Crear\ntransportador'}</BigCommand>
              <BigCommand $w={60} $off disabled><Glyph name="connection" size={30} box={32} />{'Crear\nconexión'}</BigCommand>
            </GroupBody>
            <GroupLabel>Mecanismo</GroupLabel>
          </RibbonGroup>
        </Ribbon>

        <Workspace>
          <SidePanel>
            <DockTabs>
              <DockTab $w={44}>Diseño</DockTab>
              <DockTab $w={53}>Etiquetas</DockTab>
              <DockTab $w={61} $on>Propieda...</DockTab>
              <DockTab $w={36}>Física</DockTab>
              <Spacer />
              <DockIcons>
                <IconButton aria-label="Opciones"><Glyph name="pin" size={11} /></IconButton>
                <IconButton aria-label="Cerrar panel"><Glyph name="close" size={11} /></IconButton>
              </DockIcons>
            </DockTabs>
            <PanelHeader>
              <h2>Propiedades</h2>
              <CollapseButton aria-label="Contraer"><Glyph name="minus" size={10} /></CollapseButton>
            </PanelHeader>
            <Fields>
              <Vector id="start" label="Start (mm)" values={['0,00', '0,00', '0,00']} />
              <Vector id="end" label="End (mm)" values={['0,00', '0,00', '100,00']} />
              <FieldLabel htmlFor="radius">Radius (mm)</FieldLabel>
              <FieldRow $cols={1}><SpinField id="radius" value="0,00" bg="#fff" /></FieldRow>
              <FieldLabel htmlFor="part">SensedPart</FieldLabel>
              <SelectWrap>
                <PartSelect id="part"><option> </option></PartSelect>
                <Glyph name="chevron" size={10} />
              </SelectWrap>
              <Vector id="point" label="SensedPoint (mm)" values={['0,00', '0,00', '0,00']} locked />
            </Fields>
            <PanelHeader $after={4}>
              <h2>Señales</h2>
              <CollapseButton aria-label="Contraer"><Glyph name="minus" size={10} /></CollapseButton>
            </PanelHeader>
            <Fields>
              <Signal><span>Active</span><Glyph name="one" size={16} /></Signal>
              <Signal $dim><span>SensorOut</span><Glyph name="zero" size={16} /></Signal>
            </Fields>
            <Actions>
              <ActionButton disabled>Aplicar</ActionButton>
              <ActionButton>Cerrar</ActionButton>
            </Actions>
          </SidePanel>

          <MainColumn>
            <Dock $grow>
              <DockTabs>
                <DockTab $w={46} $on>Ver1 <Glyph name="close" size={11} /></DockTab>
                <DockTab $w={80} $start>SC_Bentosak</DockTab>
                <Spacer />
                <IconButton aria-label="Opciones"><Glyph name="pin" size={10} /></IconButton>
              </DockTabs>
              <View>
                <RobotScene />
                <ViewTools>
                  <ToolRow>
                    <Tools names={['ball', 'fit']} />
                    <Tools before={18} on="selPart" names={['selCurve', 'selSurface', 'selBody', 'selPart', 'selGroup', 'selMech']} />
                    <Tools before={13} names={['selFrame', 'selTarget', 'selPath']} />
                    <Tools before={19} on="snapEnd" names={['snapObj', 'snapCenter', 'snapMid', 'snapEnd', 'snapEdge', 'snapGrav', 'snapLocal', 'snapGrid']} />
                    <Tools before={20} on="measure" names={['measure', 'mAngle', 'mDia', 'mMin', 'mKeep']} />
                  </ToolRow>
                  <ToolRow><Tools names={['play', 'stop']} /></ToolRow>
                </ViewTools>
              </View>
            </Dock>
            <Dock>
              <DockTabs>
                <DockTab $w={42} $on>Salida</DockTab>
                <Spacer />
                <DockIcons>
                  <IconButton aria-label="Opciones"><Glyph name="pin" size={10} /></IconButton>
                  <IconButton aria-label="Cerrar salida"><Glyph name="close" size={10} /></IconButton>
                </DockIcons>
              </DockTabs>
              <Output>
                <LogTable>
                  <colgroup><col width="574" /><col width="136" /><col width="136" /><col /></colgroup>
                  <thead>
                    <tr>
                      <th>
                        <Filter>
                          <label htmlFor="filter">Mostrar mensajes de:</label>
                          <SelectWrap $w={144}>
                            <FilterSelect id="filter"><option>Todos los mensajes</option></FilterSelect>
                            <Glyph name="caret" size={9} />
                          </SelectWrap>
                        </Filter>
                      </th>
                      <th>Hora</th>
                      <th>Categoría</th>
                      <th />
                    </tr>
                  </thead>
                  <tbody>
                    {log.map(([text, time]) => (
                      <tr key={time}>
                        <td><Message><Glyph name="info" size={15} />{text}</Message></td>
                        <td>{time}</td>
                        <td>Consideraciones generales</td>
                        <td />
                      </tr>
                    ))}
                  </tbody>
                </LogTable>
                <Scrollbar>
                  <Glyph name="chevronUp" size={9} />
                  <Thumb />
                  <Glyph name="chevron" size={9} />
                </Scrollbar>
              </Output>
            </Dock>
          </MainColumn>
        </Workspace>
        <StatusBar>
          <StatusHint>Modo de ajuste</StatusHint>
          <span>UCS: Estación</span>
          <Coordinates>131,61  140,50  0,00</Coordinates>
          <ControllerState>Estado de controlador: 1/1</ControllerState>
          <svg width="11" height="11" viewBox="0 0 11 11"><path d="M8 2h2M8 6h2M4 6h2M0 10h2M4 10h2M8 10h2" stroke="#6d8fbf" strokeWidth="2" /></svg>
        </StatusBar>
      </AppWindow>

      <Taskbar>
        <TaskButton aria-label="Inicio">
          <svg width="15" height="15" viewBox="0 0 16 16"><path d="m0 2.300 6.500-.9v6.200H0zM7.300 1.300 16 0v7.600H7.300zM0 8.400h6.500v6.200L0 13.700zM7.300 8.400H16V16l-8.700-1.300z" fill="#fff" /></svg>
        </TaskButton>
        <SearchBox placeholder="Bilatu Windows-en" aria-label="Bilatu Windows-en" />
        <TaskButton aria-label="Vista de tareas">
          <svg width="20" height="16" viewBox="0 0 20 16" fill="none" stroke="#e8e8e8" strokeWidth="1.300"><path d="M5 2.500h10v11H5zM3 3.500H1v9h2M17 3.500h2v9h-2" /></svg>
        </TaskButton>
        <TaskButton aria-label="Explorador">
          <svg width="22" height="18" viewBox="0 0 22 18"><path d="M1 1h8l2 2h10v14H1z" fill="#f4dc86" /><path d="M1 5h20v12H1z" fill="#f9e6a0" /><path d="M4 17v-5l2-2h10l2 2v5h-4v-3H8v3z" fill="#3c9bd0" /></svg>
        </TaskButton>
        <TaskButton aria-label="Aplicaciones">
          <svg width="20" height="20" viewBox="0 0 20 20"><path d="M0 0h20v20H0z" fill="#f5f5f5" /><path d="M4 6h3M8.500 6h3" stroke="#d8392b" strokeWidth="3" /><path d="M13 6h3" stroke="#c2392b" strokeWidth="3" /><path d="M4 10h3" stroke="#2f9e56" strokeWidth="3" /><path d="M8.500 10h3" stroke="#2c78c9" strokeWidth="3" /><path d="M13 10h3" stroke="#e8a225" strokeWidth="3" /><path d="M4 14h3" stroke="#2f9e56" strokeWidth="3" /><path d="M8.500 14h3M13 14h3" stroke="#e8a225" strokeWidth="3" /></svg>
        </TaskButton>
        <TaskButton $run aria-label="Chrome">
          <svg width="21" height="21" viewBox="0 0 22 22"><circle cx="11" cy="11" r="10.500" fill="#f2c230" /><path d="M11 11 1.900 5.750A10.500 10.500 0 0 1 20.100 5.750z" fill="#dc4437" /><path d="M11 11 1.900 5.750A10.500 10.500 0 0 0 11 21.500l4.500-8z" fill="#1f9d58" /><circle cx="11" cy="11" r="5" fill="#f5f5f5" /><circle cx="11" cy="11" r="3.800" fill="#4a86e8" /></svg>
        </TaskButton>
        <TaskButton aria-label="Internet Explorer">
          <svg width="22" height="22" viewBox="0 0 22 22"><path d="M18 15a7 7 0 1 1 1-4H6" fill="none" stroke="#3db2ea" strokeWidth="4" /><path d="M2 20C-1 14 12 1 20 2c2 1 0 4 0 4" fill="none" stroke="#f0c52e" strokeWidth="2" /></svg>
        </TaskButton>
        <TaskButton $on aria-label="RobotStudio">
          <svg width="18" height="18" viewBox="0 0 18 18"><path d="M9 1.500A7.500 7.500 0 1 1 1.800 7L9 9z" fill="#ececec" /><path d="M2 2l5 4" stroke="#cfcfcf" strokeWidth="2" /><circle cx="9" cy="9" r="2.800" fill="#f39a2c" /></svg>
        </TaskButton>
        <Spacer />
        <Tray>
          <Glyph name="chevronUp" size={14} />
          <svg width="16" height="16" viewBox="0 0 16 16" fill="none" stroke="#cfd3d6" strokeWidth="1.400"><path d="M1 14A14 14 0 0 1 14 2M4.500 14A10 10 0 0 1 14 6M8 14a6 6 0 0 1 6-4.500" /><circle cx="12.500" cy="13" r="1.500" fill="#fff" /></svg>
          <svg width="16" height="16" viewBox="0 0 16 16"><path d="m6 1 4 0 5 9-2 4H3l-2-4z" fill="#234b48" /><path d="M6 1 1 10l2 4 5-9z" fill="#1f5a4a" /><path d="m10 1 5 9-5 0-4-9z" fill="#6a5c26" /><path d="M8 4v6M8 11.500v2" stroke="#fff" strokeWidth="2.200" /></svg>
          <svg width="16" height="16" viewBox="0 0 16 16" fill="none" stroke="#f0f0f0" strokeWidth="1.300"><path d="M5 5h9v7H5zM14.500 7v3M1 2v3h4V2M3 5v5h2" /><path d="M8 7h5v4H8z" fill="#f0f0f0" stroke="none" /></svg>
          <svg width="17" height="16" viewBox="0 0 17 16" fill="none" stroke="#f0f0f0" strokeWidth="1.200"><path d="M1 6h2.500L7 2.500v11L3.500 10H1zM9 6q1.500 2 0 4M11.500 4.500q2.500 3.500 0 7M14 3q3.500 5 0 10" /></svg>
          <span>&nbsp;EUS</span>
          <Clock>15:59<br />2018/01/15</Clock>
          <svg width="22" height="20" viewBox="0 0 22 20"><path d="M1 1h15v11H8l-3 3v-3H1z" fill="#f5f5f5" /><path d="M4 4.500h9M4 7h9" stroke="#0b1218" strokeWidth="1.300" /><circle cx="15" cy="13.500" r="6.300" fill="#4a4f54" stroke="#a9adb0" /><text x="15" y="17" fontFamily="Open Sans, sans-serif" fontSize="10" fill="#fff" textAnchor="middle">3</text></svg>
        </Tray>
      </Taskbar>

      <WindowControls aria-hidden="true">
        <svg width="10" height="12" viewBox="0 0 10 12"><path d="M0 6h10" stroke="#222" /></svg>
        <svg width="10" height="12" viewBox="0 0 10 12"><path d="M.5 1.500h9v9h-9z" fill="none" stroke="#222" /></svg>
        <svg width="10" height="12" viewBox="0 0 10 12"><path d="m1 2 8 8m0-8-8 8" stroke="#222" /></svg>
      </WindowControls>
      <Watermark>
        <svg width="34" height="37" viewBox="0 0 34 37">
          <rect y="3" width="33" height="33" rx="2" fill="#333" />
          <path d="M4 6.500h5V11H4zM4 14h5v4.500H4zM4 21.500h5V26H4zM4 29h5v4.500H4zM24 6.500h5V11h-5zM24 14h5v4.500h-5zM24 21.500h5V26h-5zM24 29h5v4.500h-5z" fill="#fff" />
        </svg>
        <WatermarkText><small>powered by</small>Screencastify Lite</WatermarkText>
      </Watermark>
      <ShareBar>
        <svg width="6" height="12" viewBox="0 0 6 12"><path d="M1 0v12M4.500 0v12" stroke="#9a9a9a" /></svg>
        <p>Screencastify - Screen Video Recorder está compartiendo tu pantalla.</p>
        <StopButton>Dejar de compartir</StopButton>
        <HideLink href="#ocultar">Ocultar</HideLink>
      </ShareBar>
    </Desktop>
  );
}
